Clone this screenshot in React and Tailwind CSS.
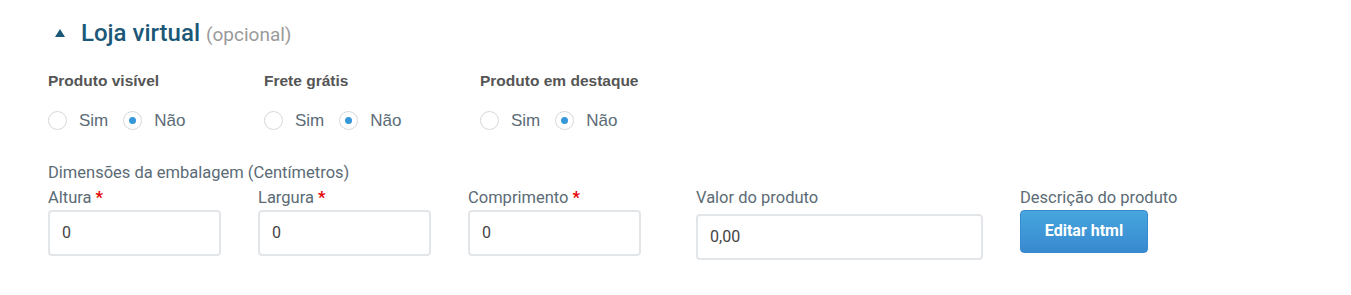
import React from 'react'

function Radio({ checked, label }) {
  return (
    <label className="flex items-center">
      <span className="flex h-[19px] w-[19px] items-center justify-center rounded-full border border-[#d5d8db] bg-white">
        {checked && <span className="h-[7px] w-[7px] rounded-full bg-[#3498db]" />}
      </span>
      <span className="ml-[12px] text-[17px] text-[#5b6b76]">{label}</span>
    </label>
  )
}

function RadioGroup({ title }) {
  return (
    <div className="w-[216px]">
      <div className="h-[18px] text-[15.5px] font-bold leading-[18px] text-[#555]">{title}</div>
      <div className="mt-[18px] flex gap-[15px]">
        <Radio label="Sim" />
        <Radio checked label="Não" />
      </div>
    </div>
  )
}

function Field({ label, required, value, width = 'w-[173px]', gap = 'mt-[2px]' }) {
  return (
    <div>
      <div className="h-[20px] text-[16.5px] leading-[20px] text-[#5b6b76]">
        {label}
        {required && <span className="ml-1 font-bold text-[#e60000]">*</span>}
      </div>
      <div className={`${gap} flex h-[46px] items-center rounded-[4px] border-2 border-[#e3e6e9] bg-white px-[12px] text-[16px] text-[#444] ${width}`}>
        {value}
      </div>
    </div>
  )
}

export default function App() {
  return (
    <div className="h-[295px] w-[1351px] bg-white pl-[48px] pt-[15px] font-['Roboto',sans-serif]">
      {/* Cabeçalho */}
      <div className="flex items-baseline">
        <svg width="10" height="8" viewBox="0 0 10 8" className="ml-[7px] mr-[16px] self-center">
          <polygon points="5,0 10,8 0,8" fill="#1b5878" />
        </svg>
        <span className="text-[24px] font-medium text-[#1b5878]">Loja virtual</span>
        <span className="ml-[6px] text-[19px] text-[#9a9a9a]">(opcional)</span>
      </div>

      {/* Opções */}
      <div className="mt-[21px] flex font-['Liberation_Sans',sans-serif]">
        <RadioGroup title="Produto visível" />
        <RadioGroup title="Frete grátis" />
        <RadioGroup title="Produto em destaque" />
      </div>

      {/* Dimensões */}
      <div className="mt-[29px] flex">
        <div>
          <div className="h-[20px] text-[16.5px] leading-[20px] text-[#5b6b76]">Dimensões da embalagem (Centímetros)</div>
          <div className="mt-[5px] flex gap-[37px]">
            <Field label="Altura" required value="0" />
            <Field label="Largura" required value="0" />
            <Field label="Comprimento" required value="0" />
          </div>
        </div>
        <div className="ml-[55px] mt-[25px]">
          <Field label="Valor do produto" value="0,00" width="w-[287px]" gap="mt-[6px]" />
        </div>
        <div className="ml-[37px] mt-[25px]">
          <div className="h-[20px] text-[16.5px] leading-[20px] text-[#5b6b76]">Descrição do produto</div>
          <button className="mt-[2px] h-[43px] w-[128px] rounded-[4px] border border-[#3a8ace] bg-gradient-to-b from-[#47a6de] to-[#3889cf] text-[16px] font-bold text-white">
            Editar html
          </button>
        </div>
      </div>
    </div>
  )
}
